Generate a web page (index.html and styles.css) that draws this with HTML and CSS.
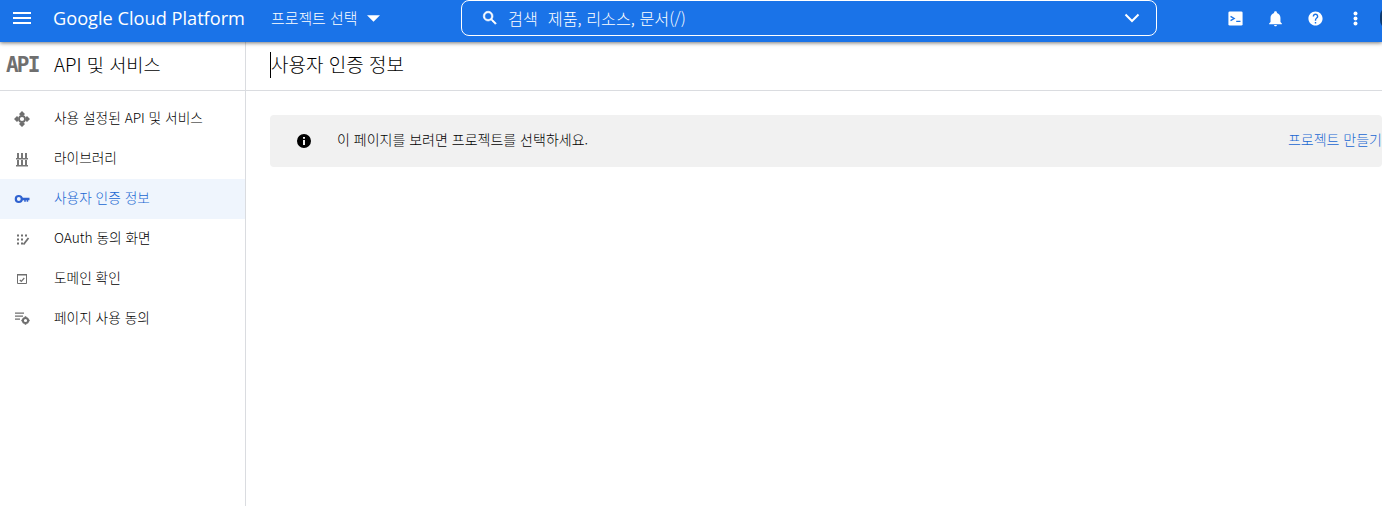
FILE: index.html
```html
<!DOCTYPE html>
<html lang="ko">
<head>
<meta charset="utf-8">
<title>사용자 인증 정보</title>
<link rel="stylesheet" href="styles.css">
</head>
<body>
<header class="topbar">
  <svg class="menu-icon" viewBox="0 0 18 12" width="18" height="12"><path d="M0 0h18v2H0zM0 5h18v2H0zM0 10h18v2H0z" fill="#fff"/></svg>
  <span class="brand">Google Cloud Platform</span>
  <button class="project"><span>프로젝트 선택</span><svg class="caret" viewBox="0 0 12 6" width="13" height="7"><path d="M0 0h12L6 6z" fill="#fff"/></svg></button>
  <div class="search">
    <svg class="search-icon" viewBox="0 0 24 24" width="18" height="18"><path fill="#fff" stroke="#fff" stroke-width=".8" d="M15.5 14h-.79l-.28-.27A6.47 6.47 0 0 0 16 9.5 6.5 6.5 0 1 0 9.5 16c1.61 0 3.09-.59 4.23-1.57l.27.28v.79l5 4.99L20.49 19l-4.99-5zm-6 0C7.01 14 5 11.99 5 9.5S7.01 5 9.5 5 14 7.01 14 9.5 11.99 14 9.5 14z"/></svg>
    <span class="search-label">검색</span>
    <span class="search-hint">제품, 리소스, 문서(/)</span>
    <svg class="chev" viewBox="0 0 16 10" width="16" height="10"><path d="M1.500 1.500 8 8l6.500-6.500" fill="none" stroke="#fff" stroke-width="2"/></svg>
  </div>
  <div class="actions">
    <svg viewBox="0 0 24 24"><path fill="#fff" d="M4 2h16a2 2 0 0 1 2 2v16a2 2 0 0 1-2 2H4a2 2 0 0 1-2-2V4a2 2 0 0 1 2-2z"/><path d="m5 9 5 3-5 3M13 16h6" fill="none" stroke="#1a73e8" stroke-width="2"/></svg>
    <svg viewBox="0 0 24 24"><path fill="#fff" d="M12 23c1.100 0 2-.9 2-2h-4c0 1.100.9 2 2 2zm7-6v-6c0-3.400-2-6-5-6.800V3.500c0-1-.9-1.800-2-1.800s-2 .8-2 1.800v.7C7 5 5 7.600 5 11v6l-2 2v1h18v-1l-2-2z"/></svg>
    <svg viewBox="0 0 24 24"><path fill="#fff" d="M12 2C6.480 2 2 6.480 2 12s4.480 10 10 10 10-4.480 10-10S17.520 2 12 2zm1 17h-2v-2h2v2zm2.070-7.750-.9.920C13.450 12.900 13 13.500 13 15h-2v-.5c0-1.100.45-2.100 1.170-2.830l1.240-1.260c.37-.36.590-.86.590-1.410 0-1.100-.9-2-2-2s-2 .9-2 2H8c0-2.210 1.790-4 4-4s4 1.790 4 4c0 .88-.36 1.680-.93 2.250z"/></svg>
    <svg viewBox="0 0 24 24"><circle cx="12" cy="5" r="2.800" fill="#fff"/><circle cx="12" cy="12" r="2.800" fill="#fff"/><circle cx="12" cy="19" r="2.800" fill="#fff"/></svg>
    <span class="avatar"></span>
  </div>
</header>
<div class="layout">
  <aside class="sidebar">
    <div class="side-head">
      <span class="api-logo">API</span>
      <span class="side-title">API 및 서비스</span>
    </div>
    <nav class="nav">
      <a class="nav-item">
        <svg viewBox="0 0 16 16" width="16" height="16"><path fill="#6f6f6f" d="M8 0 5 3l1.500 1.500h3L11 3zM8 16l-3-3 1.500-1.500h3L11 13zM0 8l3-3 1.500 1.500v3L3 11zM16 8l-3-3-1.500 1.500v3L13 11z"/><circle cx="8" cy="8" r="3" fill="none" stroke="#6f6f6f" stroke-width="1.800"/></svg>
        <span>사용 설정된 API 및 서비스</span>
      </a>
      <a class="nav-item">
        <svg viewBox="0 0 16 16" width="16" height="16"><path fill="#777" d="M3 2h2v5H3zM7 2h2v5H7zM11 2h2v5h-2zM2 7h12v1.500H2zM3 9h2v5H3zM7 9h2v5H7zM11 9h2v5h-2zM2 14h12v1.500H2z"/></svg>
        <span>라이브러리</span>
      </a>
      <a class="nav-item active">
        <svg viewBox="0 0 16 16" width="16" height="16"><circle cx="4.800" cy="8" r="3" fill="none" stroke="#2f62d0" stroke-width="2.200"/><path fill="#2f62d0" d="M8 6.800h7.500v2.400h-1.300v1.600h-1.600V9.200h-.8v1.600h-1.600V9.200H8z"/></svg>
        <span>사용자 인증 정보</span>
      </a>
      <a class="nav-item">
        <svg viewBox="0 0 16 16" width="16" height="16"><path fill="#6f6f6f" d="M3 3.500h2v2H3zM7 3.500h2v2H7zM11 3.500h2v2h-2zM3 7.500h2v2H3zM7 7.500h2v2H7zM3 11.500h2v2H3zM7 11.500h2v2H7z"/><path fill="none" stroke="#6f6f6f" stroke-width="1.800" d="m9.500 13.500 5-6.500"/></svg>
        <span>OAuth 동의 화면</span>
      </a>
      <a class="nav-item">
        <svg viewBox="0 0 16 16" width="16" height="16"><path fill="none" stroke="#6f6f6f" stroke-width="1" d="M3.500 3.500h9v9h-9z"/><path fill="#6f6f6f" d="M3 3h10v1.500H3z"/><path fill="none" stroke="#6f6f6f" stroke-width="1.200" d="m5.800 9 1.500 1.300L10.300 7"/></svg>
        <span>도메인 확인</span>
      </a>
      <a class="nav-item">
        <svg viewBox="0 0 16 16" width="16" height="16"><path fill="#6f6f6f" d="M1 1.500h9v1.200H1zM1 4.500h8v1.200H1zM1 7.500h5v1.200H1z"/><circle cx="11.500" cy="9.500" r="2.600" fill="none" stroke="#6f6f6f" stroke-width="2"/><path stroke="#6f6f6f" stroke-width="1.600" stroke-dasharray="1.400 5.600" d="M11.500 5.300v8.400M7.300 9.500h8.400"/></svg>
        <span>페이지 사용 동의</span>
      </a>
    </nav>
  </aside>
  <main class="main">
    <div class="page-head"><span class="page-title">사용자 인증 정보</span></div>
    <div class="banner">
      <svg class="info" viewBox="0 0 24 24" width="16" height="16"><path d="M12 1.500a10.500 10.500 0 1 0 0 21 10.500 10.500 0 0 0 0-21zM13.500 18h-3v-7.500h3zM13.500 8.500h-3V6h3z"/></svg>
      <span class="banner-text">이 페이지를 보려면 프로젝트를 선택하세요.</span>
      <a class="banner-link">프로젝트 만들기</a>
    </div>
  </main>
</div>
</body>
</html>
```
FILE: styles.css
```css
html, body {
  margin: 0;
  height: 506px;
  width: 1382px;
  overflow: hidden;
  background: #fff;
  font-family: "Noto Sans CJK KR", "Liberation Sans", sans-serif;
  font-weight: 300;
  color: #000;
}
.topbar {
  height: 42px;
  box-sizing: border-box;
  padding-bottom: 6px;
  background: #1a73e8;
  display: flex;
  align-items: center;
  color: #fff;
  box-shadow: 0 1px 4px rgba(0,0,0,.55);
  position: relative;
  z-index: 2;
}
.menu-icon { margin-left: 13px; flex: none; }
.brand {
  margin-left: 22px;
  width: 218px;
  flex: none;
  font-family: "Open Sans", Roboto, sans-serif;
  font-size: 18.2px;
  font-weight: 400;
  white-space: nowrap;
}
.project {
  all: unset;
  display: flex;
  align-items: center;
  width: 190px;
  flex: none;
  font-size: 14.9px;
  line-height: 20px;
  color: #fff;
}
.caret { margin-left: 10px; margin-top: 1px; }
.search {
  width: 694px;
  height: 34px;
  flex: none;
  border: 1px solid #fff;
  border-radius: 8px;
  display: flex;
  align-items: center;
  font-size: 16.2px;
  line-height: 20px;
  box-sizing: content-box;
}
.search-icon { margin-left: 19px; }
.search-label { margin-left: 9px; }
.search-hint { margin-left: 10px; }
.chev { margin-left: auto; margin-right: 16px; }
.actions {
  display: flex;
  align-items: center;
  margin-left: 70px;
  gap: 23px;
}
.actions svg { width: 17px; height: 17px; flex: none; }
.avatar {
  width: 20px;
  height: 24px;
  margin-left: -7px;
  border-radius: 12px;
  background: #0d3a70;
  flex: none;
}
.layout {
  display: flex;
  height: 464px;
}
.sidebar {
  width: 245px;
  flex: none;
  border-right: 1px solid #dadce0;
}
.side-head {
  height: 48px;
  border-bottom: 1px solid #dadce0;
  display: flex;
  align-items: center;
}
.api-logo {
  margin-left: 6px;
  width: 48px;
  font-family: "DejaVu Sans Mono", monospace;
  font-weight: 700;
  font-size: 21px;
  letter-spacing: -1.800px;
  line-height: 20px;
  padding-bottom: 2px;
  color: #6f6f6f;
}
.side-title { font-size: 18.700px; line-height: 24px; padding-bottom: 5px; }
.nav { display: flex; flex-direction: column; padding-top: 8px; }
.nav-item {
  height: 40px;
  display: flex;
  align-items: center;
  font-size: 13.700px;
  color: #000;
}
.nav-item span { line-height: 20px; padding-bottom: 4px; }
.nav-item svg { margin-left: 14px; margin-right: 24px; flex: none; }
.nav-item.active { background: #eff5fd; color: #1967d2; }
.main { flex: 1; min-width: 0; }
.page-head {
  height: 48px;
  border-bottom: 1px solid #dadce0;
  display: flex;
  align-items: center;
  padding-left: 24px;
}
.page-title { font-size: 19px; line-height: 24px; margin-bottom: 2px; border-left: 1px solid #000; padding-bottom: 2px; }
.banner {
  margin: 24px 0 0 24px;
  width: 1112px;
  height: 52px;
  background: #f1f1f1;
  border-radius: 4px;
  display: flex;
  align-items: center;
  font-size: 14px;
  line-height: 20px;
}
.info { margin-left: 26px; flex: none; }
.banner-text { margin-left: 25px; padding-bottom: 4px; }
.banner-link { margin-left: auto; color: #1967d2; white-space: nowrap; padding-bottom: 4px; }
```
